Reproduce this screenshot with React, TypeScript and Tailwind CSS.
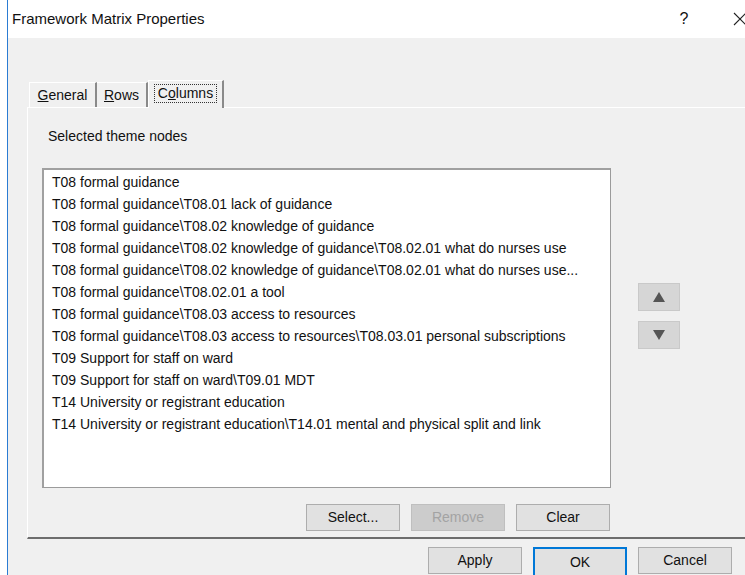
import { ReactNode } from "react";

const nodes = [
  "T08 formal guidance",
  "T08 formal guidance\\T08.01 lack of guidance",
  "T08 formal guidance\\T08.02 knowledge of guidance",
  "T08 formal guidance\\T08.02 knowledge of guidance\\T08.02.01 what do nurses use",
  "T08 formal guidance\\T08.02 knowledge of guidance\\T08.02.01 what do nurses use...",
  "T08 formal guidance\\T08.02.01 a tool",
  "T08 formal guidance\\T08.03 access to resources",
  "T08 formal guidance\\T08.03 access to resources\\T08.03.01 personal subscriptions",
  "T09 Support for staff on ward",
  "T09 Support for staff on ward\\T09.01 MDT",
  "T14 University or registrant education",
  "T14 University or registrant education\\T14.01 mental and physical split and link",
];

function WinButton({ children, disabled, primary }: { children: ReactNode; disabled?: boolean; primary?: boolean }) {
  return (
    <button
      className={
        primary
          ? "w-[94px] h-[30px] shrink-0 border-2 border-[#0078d7] bg-[#e1e1e1] text-[14px] text-[#111]"
          : disabled
          ? "w-[94px] h-[27px] shrink-0 border border-[#bfbfbf] bg-[#cccccc] text-[14px] text-[#a3a3a3]"
          : "w-[94px] h-[27px] shrink-0 border border-[#adadad] bg-[#e1e1e1] text-[14px] text-[#111]"
      }
    >
      {children}
    </button>
  );
}

function ArrowButton({ up }: { up?: boolean }) {
  return (
    <button className="w-[42px] h-[28px] flex items-center justify-center border border-[#c9c9c9] bg-[#d6d6d6]">
      <svg width="14" height="12" viewBox="0 0 14 12">
        {up ? <path d="M7 1 L13 11 L1 11 Z" fill="#555" /> : <path d="M1 1 L13 1 L7 11 Z" fill="#555" />}
      </svg>
    </button>
  );
}

export default function App() {
  return (
    <div
      className="w-[745px] h-[575px] overflow-hidden bg-white flex"
      style={{ fontFamily: '"Liberation Sans", Arial, sans-serif' }}
    >
      <div className="w-[7px] shrink-0 bg-white" />
      <div className="flex-1 min-w-0 overflow-hidden flex flex-col border-l border-[#2b7cd3]">
        {/* Title bar */}
        <div className="h-[38px] shrink-0 bg-white flex items-center pl-[4px] text-[15px] text-[#111]">
          <span className="flex-1">Framework Matrix Properties</span>
          <span className="text-[16px] w-[20px] text-center">?</span>
          <span className="ml-[39px] -mr-[2px] w-[14px] shrink-0 flex">
            <svg width="14" height="14" viewBox="0 0 14 14">
              <path d="M1 1 L13 13 M13 1 L1 13" stroke="#222" strokeWidth="1.1" />
            </svg>
          </span>
        </div>

        {/* Dialog body */}
        <div className="flex-1 min-w-0 bg-[#f0f0f0] flex flex-col">
          {/* Tabs */}
          <div className="h-[69px] shrink-0 flex items-end pl-[21px] text-[14px] text-[#111]">
            <div className="h-[25px] w-[68px] flex items-center justify-center border-t border-l border-white border-r-2 border-r-[#8a8a8a] bg-[#f0f0f0]">
              <span><u>G</u>eneral</span>
            </div>
            <div className="h-[25px] w-[51px] flex items-center justify-center border-t border-white border-r-2 border-r-[#8a8a8a] bg-[#f0f0f0]">
              <span><u>R</u>ows</span>
            </div>
            <div className="h-[28px] w-[76px] flex items-start justify-center pt-[3px] border-t border-l border-white border-r-2 border-r-[#8a8a8a] bg-[#f0f0f0] -mb-px relative">
              <span className="border border-dotted border-[#333] px-[3px] leading-[17px]">
                C<u>o</u>lumns
              </span>
            </div>
          </div>

          {/* Tab page */}
          <div className="ml-[19px] w-[760px] shrink-0 border-t border-l border-white border-b-2 border-b-[#6d6d6d] pl-[14px] pt-[18px] pb-[6px]">
            <div className="text-[14px] text-[#111] pl-[6px] leading-[20px]">Selected theme nodes</div>
            <div className="flex mt-[22px]">
              <div className="w-[569px] h-[320px] bg-white border border-[#9b9b9b] border-t-2 border-l-2 border-t-[#a0a0a0] border-l-[#a0a0a0] pl-[8px] pt-[1px] text-[14px] text-[#111]">
                {nodes.map((n) => (
                  <div key={n} className="h-[22px] leading-[22px] whitespace-nowrap">
                    {n}
                  </div>
                ))}
              </div>
              <div className="ml-[27px] pt-[115px] flex flex-col gap-[10px]">
                <ArrowButton up />
                <ArrowButton />
              </div>
            </div>
            <div className="w-[568px] flex justify-end gap-[11px] mt-[16px]">
              <WinButton>Select...</WinButton>
              <WinButton disabled>Remove</WinButton>
              <WinButton>Clear</WinButton>
            </div>
          </div>

          {/* Dialog buttons */}
          <div className="flex justify-end gap-[11px] pr-[13px] mt-[8px]">
            <WinButton>Apply</WinButton>
            <WinButton primary>OK</WinButton>
            <WinButton>Cancel</WinButton>
          </div>
        </div>
      </div>
    </div>
  );
}
